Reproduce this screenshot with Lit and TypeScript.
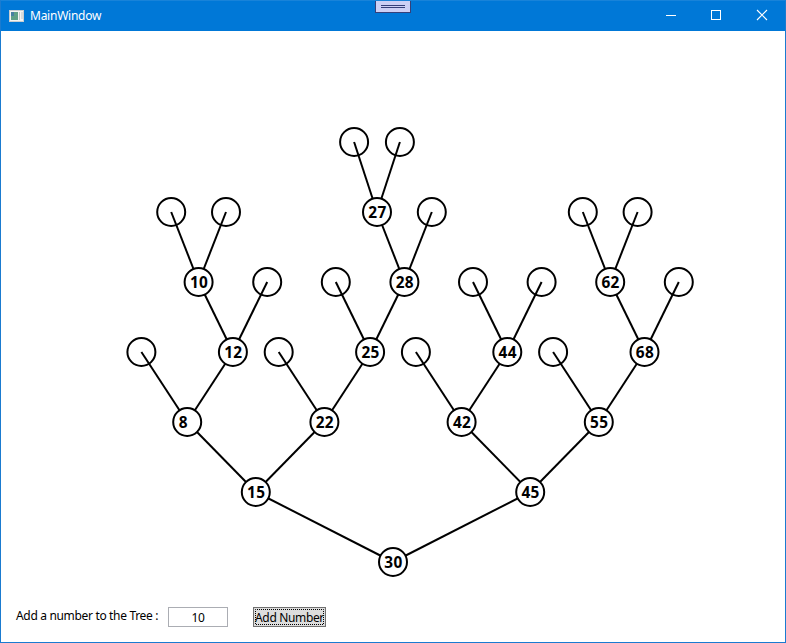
import { LitElement, html, svg, css } from "lit";
import { customElement } from "lit/decorators.js";

interface TreeNode {
  x: number;
  y: number;
  value?: number;
  children?: TreeNode[];
}

const leaf = (x: number, y: number): TreeNode => ({ x, y });
const node = (value: number, x: number, y: number, ...children: TreeNode[]): TreeNode => ({ x, y, value, children });

const tree = node(30, 393, 562,
  node(15, 255.8, 492,
    node(8, 187.2, 422,
      leaf(141.4, 352),
      node(12, 232.9, 352,
        node(10, 198.6, 282, leaf(171.2, 212), leaf(226, 212)),
        leaf(267.2, 282))),
    node(22, 324.4, 422,
      leaf(278.7, 352),
      node(25, 370.1, 352,
        leaf(335.8, 282),
        node(28, 404.4, 282,
          node(27, 377, 212, leaf(354.1, 142), leaf(399.9, 142)),
          leaf(431.8, 212))))),
  node(45, 530.2, 492,
    node(42, 461.6, 422,
      leaf(415.9, 352),
      node(44, 507.3, 352, leaf(473, 282), leaf(541.6, 282))),
    node(55, 598.8, 422,
      leaf(553.1, 352),
      node(68, 644.5, 352,
        node(62, 610.2, 282, leaf(582.8, 212), leaf(637.6, 212)),
        leaf(678.8, 282)))));

const flatten = (n: TreeNode): TreeNode[] => [n, ...(n.children ?? []).flatMap(flatten)];

@customElement("tree-canvas")
class TreeCanvas extends LitElement {
  static styles = css`
    :host { display: block; }
    .canvas { display: block; }
    .edge { stroke: #000; stroke-width: 2; }
    .ring { stroke: #000; stroke-width: 2; fill: none; }
    .filled { fill: #fff; }
    .value { font: bold 15.4px "Noto Sans", "Open Sans", sans-serif; letter-spacing: 0.3px; text-anchor: middle; }
  `;

  render() {
    const nodes = flatten(tree);
    return html`<svg class="canvas" width="784" height="560" viewBox="1 31 784 560">
      ${nodes.flatMap((n) => (n.children ?? []).map((c) => svg`
        <line class="edge" x1=${n.x} y1=${n.y} x2=${c.x} y2=${c.y}></line>`))}
      ${nodes.map((n) => n.value === undefined
        ? svg`<circle class="ring" cx=${n.x} cy=${n.y} r="14"></circle>`
        : svg`<circle class="ring filled" cx=${n.x} cy=${n.y} r="14"></circle>
          <text class="value" x=${n.x - (n.value < 10 ? 4.4 : 0) + 0.4} y=${n.y + 5.6}>${n.value}</text>`)}
    </svg>`;
  }
}

@customElement("app-root")
class AppRoot extends LitElement {
  static styles = css`
    :host {
      display: flex;
      flex-direction: column;
      position: relative;
      box-sizing: border-box;
      width: 786px;
      height: 643px;
      border: 1px solid #1a7bd0;
      border-top-color: #1883d9;
      background: #fff;
      color: #000;
      font: 12px "Noto Sans", "Open Sans", sans-serif;
      overflow: hidden;
    }
    .titlebar {
      flex: none;
      display: flex;
      align-items: center;
      height: 30px;
      background: #0078d7;
      color: #fff;
    }
    .appicon { margin-left: 8px; }
    .title { flex: 1; margin-left: 6px; font-size: 12px; line-height: 16px; letter-spacing: -0.25px; }
    .control { display: flex; justify-content: center; width: 46px; height: 30px; }
    .close { width: 45px; }
    .grip { position: absolute; left: 374px; top: -1px; }
    .form { display: flex; padding: 16px 0 0 15px; }
    .label { width: 152px; line-height: 17px; white-space: pre; letter-spacing: -0.33px; }
    .field {
      box-sizing: border-box;
      width: 60px;
      height: 20px;
      border: 1px solid #abadb3;
      padding: 0;
      background: #fff;
      font: inherit;
      letter-spacing: -0.3px;
      line-height: 18px;
      text-align: center;
      outline: none;
    }
    .add {
      display: flex;
      align-items: center;
      justify-content: center;
      box-sizing: border-box;
      position: relative;
      width: 73px;
      height: 20px;
      margin: 0 0 0 25px;
      padding: 0;
      border: 1px solid #707070;
      background: #ddd;
      color: #000;
      font: inherit;
      letter-spacing: -0.35px;
      white-space: nowrap;
    }
    .focus { position: absolute; left: 0; top: 0; }
  `;

  render() {
    return html`
      <div class="titlebar">
        <svg class="appicon" width="15" height="12" viewBox="0 0 15 12">
          <rect width="15" height="12" fill="#c9cdd0"></rect>
          <rect x="1" y="1" width="13" height="10" fill="#f4f4f2"></rect>
          <rect x="2" y="2" width="7" height="8" fill="#5f9f86"></rect>
          <rect x="2" y="2" width="3" height="4" fill="#477fa0"></rect>
          <rect x="10" y="2" width="1" height="8" fill="#c5c9ca"></rect>
          <rect x="12" y="2" width="2" height="7" fill="#d9dcdc"></rect>
        </svg>
        <span class="title">MainWindow</span>
        <span class="control"><svg width="46" height="30"><path d="M18 14.5h10" stroke="#fff"></path></svg></span>
        <span class="control"><svg width="46" height="30"><rect x="17.5" y="9.5" width="9" height="9" fill="none" stroke="#fff"></rect></svg></span>
        <span class="control close"><svg width="45" height="30"><path d="M17 9l10 10M27 9l-10 10" stroke="#fff" stroke-width="1.1"></path></svg></span>
      </div>
      <svg class="grip" width="36" height="13">
        <rect x=".5" y=".5" width="35" height="12" fill="#ccd0f5" stroke="#35407a"></rect>
        <path d="M6 5.5h24M6 7.5h24" stroke="#35407a"></path>
      </svg>
      <tree-canvas></tree-canvas>
      <div class="form">
        <span class="label">Add a number to the Tree :</span>
        <input class="field" .value=${"10"}>
        <button class="add">Add Number
          <svg class="focus" width="71" height="18"><rect x="1.5" y="1.5" width="68" height="15" fill="none" stroke="#000" stroke-dasharray="1 1" stroke-dashoffset=".5"></rect></svg>
        </button>
      </div>`;
  }
}
